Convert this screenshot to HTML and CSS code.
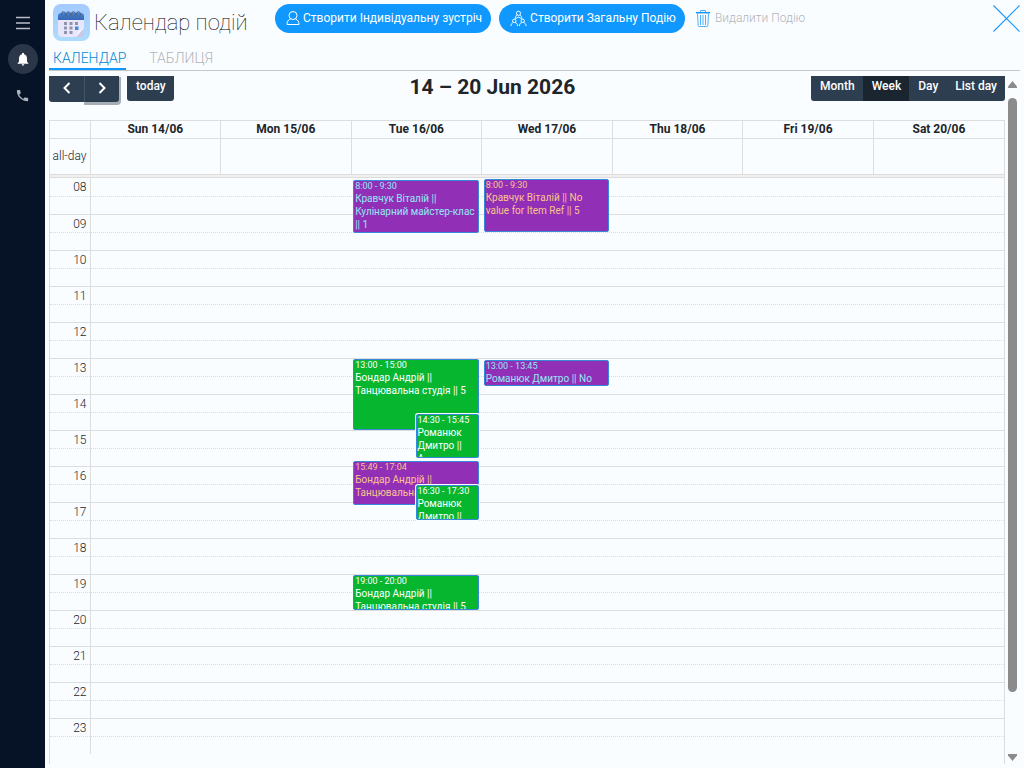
FILE: index.html
```html
<!DOCTYPE html>
<html lang="uk">
<head>
<meta charset="utf-8">
<title>Календар подій</title>
<link rel="stylesheet" href="styles.css">
</head>
<body>
<div class="app">
  <nav class="rail" aria-label="Навігація">
    <button class="rail-btn" aria-label="Меню"><svg width="14" height="14" viewBox="0 0 14 14" stroke="#b9bfc8" stroke-width="1.4"><path d="M0 1.5h14M0 7h14M0 12.5h14"/></svg></button>
    <button class="rail-btn rail-btn-active" aria-label="Сповіщення"><svg width="16" height="16" viewBox="0 0 24 24" fill="#fff"><path d="M12 22c1.1 0 2-.9 2-2h-4c0 1.1.9 2 2 2zm6-6v-5c0-3.1-1.6-5.6-4.5-6.300V4a1.500 1.500 0 0 0-3 0v.7C7.600 5.400 6 7.900 6 11v5l-2 2v1h16v-1z"/></svg></button>
    <button class="rail-btn" aria-label="Дзвінки"><svg width="15" height="15" viewBox="0 0 24 24" fill="#aeb4be"><path d="M6.600 10.800c1.400 2.800 3.800 5.100 6.600 6.600l2.200-2.200c.3-.3.700-.4 1-.2 1.100.4 2.300.6 3.600.6.6 0 1 .4 1 1V20c0 .6-.4 1-1 1C10.600 21 3 13.400 3 4c0-.6.5-1 1-1h3.500c.6 0 1 .4 1 1 0 1.300.2 2.500.6 3.600.1.300 0 .7-.2 1z"/></svg></button>
  </nav>

  <main class="main">
    <header class="head">
      <div class="brand">
        <svg class="logo" width="37" height="37" viewBox="0 0 37 37">
          <defs>
            <linearGradient id="bg" x1="0" y1="0" x2="0" y2="1"><stop offset="0" stop-color="#a3caff"/><stop offset="1" stop-color="#aedcfd"/></linearGradient>
            <linearGradient id="top" x1="0" y1="0" x2="0" y2="1"><stop offset="0" stop-color="#3e86dd"/><stop offset="1" stop-color="#3667b5"/></linearGradient>
          </defs>
          <rect width="37" height="37" rx="8" fill="url(#bg)"/>
          <path d="M8 9h20q3 0 3 3v13l-7 8H9q-4 0-4-4V12q0-3 3-3z" fill="#e7e6fa"/>
          <path d="M31 24v6q0 3-3 3h-5z" fill="#c9c8e6"/>
          <path d="M31 24l-8 9q1-7 8-9z" fill="#f5f3ff"/>
          <path d="M8 9h20q3 0 3 3v4H5v-4q0-3 3-3z" fill="url(#top)"/>
          <g fill="none" stroke="#506a98" stroke-width="1.300"><path d="M10.500 13c-3-1-2-6 .5-5s1.500 4 .5 4.500M15.500 13c-3-1-2-6 .5-5s1.500 4 .5 4.500M20.500 13c-3-1-2-6 .5-5s1.500 4 .5 4.500M25.500 13c-3-1-2-6 .5-5s1.500 4 .5 4.500"/></g>
          <g fill="#9294ae"><path d="M11 18h3v3h-3zM16.500 18h3v3h-3zM22 18h3v3h-3zM11 22.500h3v3h-3zM16.500 22.500h3v3h-3zM11 27h3v3h-3zM16.500 27h3v3h-3z"/><path fill="#4589d4" d="M22 22.500h3.500V26H22z"/></g>
        </svg>
        <h1 class="title">Календар подій</h1>
      </div>
      <div class="actions">
        <button class="pill"><svg width="14" height="16" viewBox="0 0 14 16" fill="none" stroke="#fff"><circle cx="7" cy="5.500" r="4"/><path d="M4.500 9C2 10 1 11.500 1 14.500h12C13 11.500 12 10 9.500 9"/></svg>Створити Індивідуальну зустріч</button>
        <button class="pill"><svg width="17" height="17" viewBox="0 0 18 17" fill="none" stroke="#fff"><circle cx="9" cy="3" r="2.200"/><path d="M7.500 5C6 5.500 5.700 7 5.500 9M10.500 5c1.500.5 1.800 2 2 4M6 8.500l3-1.500 3 1.500"/><circle cx="4.500" cy="11" r="1.800"/><circle cx="13.500" cy="11" r="1.800"/><path d="M1 16.500c0-2.200 1-3.200 2.500-3.700M8 16.500c0-2.200-1-3.200-2.500-3.700M10 16.500c0-2.200 1-3.200 2.500-3.700M17 16.500c0-2.200-1-3.200-2.500-3.700"/></svg>Створити Загальну Подію</button>
        <button class="ghost" disabled><svg width="14" height="18" viewBox="0 0 14 18" fill="none" stroke="#4eb0fa"><path stroke="#1697ff" stroke-width="1.500" d="M0 3.700h14"/><path d="M4.500 3V1.500h5V3M1.500 4.500l.7 12q0 1 1 1h7.600q1 0 1-1l.7-12M4.500 6v10M7 6v10M9.500 6v10"/></svg>Видалити Подію</button>
      </div>
      <button class="close" aria-label="Закрити"><svg width="27" height="27" viewBox="0 0 27 27" stroke="#1697ff" stroke-width="1.100"><path d="M.5.5l26 26M26.500.5l-26 26"/></svg></button>
    </header>

    <nav class="tabs">
      <a class="tab tab-active" href="#calendar">КАЛЕНДАР</a>
      <a class="tab" href="#table">ТАБЛИЦЯ</a>
    </nav>

    <div class="scroller">
      <section class="calendar" id="calendar">
        <div class="toolbar">
          <div class="tools">
            <div class="group">
              <button class="tool tool-arrow" aria-label="prev"><svg width="8" height="12" viewBox="0 0 8 12" fill="none" stroke="#fff" stroke-width="2"><path d="M6.500 1L1.500 6l5 5"/></svg></button>
              <button class="tool tool-arrow tool-focus" aria-label="next"><svg width="8" height="12" viewBox="0 0 8 12" fill="none" stroke="#fff" stroke-width="2"><path d="M1.500 1l5 5-5 5"/></svg></button>
            </div>
            <button class="tool">today</button>
          </div>
          <h2 class="range">14 – 20 Jun 2026</h2>
          <div class="group">
            <button class="tool">Month</button>
            <button class="tool tool-on">Week</button>
            <button class="tool">Day</button>
            <button class="tool">List day</button>
          </div>
        </div>

        <div class="board">
          <table class="days">
            <thead><tr><th class="axis"></th><th>Sun 14/06</th><th>Mon 15/06</th><th>Tue 16/06</th><th>Wed 17/06</th><th>Thu 18/06</th><th>Fri 19/06</th><th>Sat 20/06</th></tr></thead>
            <tbody><tr><td class="axis">all-day</td><td></td><td></td><td></td><td></td><td></td><td></td><td></td></tr></tbody>
          </table>
          <div class="divider"></div>
          <div class="timegrid">
            <table class="slots">
              <tbody>
                <tr><td class="axis">08</td><td></td></tr><tr class="half"><td class="axis"></td><td></td></tr>
                <tr><td class="axis">09</td><td></td></tr><tr class="half"><td class="axis"></td><td></td></tr>
                <tr><td class="axis">10</td><td></td></tr><tr class="half"><td class="axis"></td><td></td></tr>
                <tr><td class="axis">11</td><td></td></tr><tr class="half"><td class="axis"></td><td></td></tr>
                <tr><td class="axis">12</td><td></td></tr><tr class="half"><td class="axis"></td><td></td></tr>
                <tr><td class="axis">13</td><td></td></tr><tr class="half"><td class="axis"></td><td></td></tr>
                <tr><td class="axis">14</td><td></td></tr><tr class="half"><td class="axis"></td><td></td></tr>
                <tr><td class="axis">15</td><td></td></tr><tr class="half"><td class="axis"></td><td></td></tr>
                <tr><td class="axis">16</td><td></td></tr><tr class="half"><td class="axis"></td><td></td></tr>
                <tr><td class="axis">17</td><td></td></tr><tr class="half"><td class="axis"></td><td></td></tr>
                <tr><td class="axis">18</td><td></td></tr><tr class="half"><td class="axis"></td><td></td></tr>
                <tr><td class="axis">19</td><td></td></tr><tr class="half"><td class="axis"></td><td></td></tr>
                <tr><td class="axis">20</td><td></td></tr><tr class="half"><td class="axis"></td><td></td></tr>
                <tr><td class="axis">21</td><td></td></tr><tr class="half"><td class="axis"></td><td></td></tr>
                <tr><td class="axis">22</td><td></td></tr><tr class="half"><td class="axis"></td><td></td></tr>
                <tr><td class="axis">23</td><td></td></tr><tr class="half"><td class="axis"></td><td></td></tr>
              </tbody>
            </table>
            <div class="lanes">
              <div class="lane"></div>
              <div class="lane"></div>
              <div class="lane">
                <a class="event purple cyan" href="#e1" style="top:2px;height:53px"><span class="time">8:00 - 9:30</span><span class="name">Кравчук Віталій || Кулінарний майстер-клас || 1</span></a>
                <a class="event green" href="#e2" style="top:181px;height:71px"><span class="time">13:00 - 15:00</span><span class="name">Бондар Андрій || Танцювальна студія || 5</span></a>
                <a class="event green inset" href="#e3" style="top:236px;height:44px"><span class="time">14:30 - 15:45</span><span class="name">Романюк Дмитро ||<br>А</span></a>
                <a class="event purple peach" href="#e4" style="top:283px;height:44px"><span class="time">15:49 - 17:04</span><span class="name">Бондар Андрій || Танцювальна</span></a>
                <a class="event green inset" href="#e5" style="top:307px;height:35px"><span class="time">16:30 - 17:30</span><span class="name">Романюк Дмитро ||</span></a>
                <a class="event green" href="#e6" style="top:397px;height:35px"><span class="time">19:00 - 20:00</span><span class="name">Бондар Андрій || Танцювальна студія || 5</span></a>
              </div>
              <div class="lane">
                <a class="event purple peach" href="#e7" style="top:1px;height:53px"><span class="time">8:00 - 9:30</span><span class="name">Кравчук Віталій || No value for Item Ref || 5</span></a>
                <a class="event purple cyan" href="#e8" style="top:182px;height:26px"><span class="time">13:00 - 13:45</span><span class="name">Романюк Дмитро || No</span></a>
              </div>
              <div class="lane"></div>
              <div class="lane"></div>
              <div class="lane"></div>
            </div>
          </div>
        </div>
      </section>
      <div class="scrollbar" aria-hidden="true">
        <svg width="9" height="7" viewBox="0 0 9 7" fill="#8b8b8b"><path d="M4.500 0L9 5.500V7H0V5.500z"/></svg>
        <div class="track"><div class="thumb"></div></div>
        <svg width="9" height="7" viewBox="0 0 9 7" fill="#8b8b8b"><path d="M4.500 7L9 1.500V0H0v1.500z"/></svg>
      </div>
    </div>
  </main>
</div>
</body>
</html>
```
FILE: styles.css
```css
* { box-sizing: border-box; }

body {
  margin: 0;
  background: #fafdff;
  color: #212529;
  font-family: Roboto, "Liberation Sans", sans-serif;
  font-size: 12px;
}

button { font: inherit; border: 0; background: none; padding: 0; }
a { text-decoration: none; }
svg { display: block; flex: none; }

.app { display: flex; min-height: 100vh; }

.rail {
  width: 45px;
  flex: none;
  background: #061327;
  padding-top: 8px;
  display: flex;
  flex-direction: column;
  align-items: center;
  gap: 6px;
}
.rail-btn {
  width: 30px;
  height: 30px;
  border-radius: 50%;
  display: flex;
  align-items: center;
  justify-content: center;
}
.rail-btn-active { background: #2b3648; }

.main {
  flex: 1;
  min-width: 0;
  padding: 4px;
  display: flex;
  flex-direction: column;
}

.head { display: flex; align-items: flex-start; padding-left: 4px; }
.brand { display: flex; align-items: center; gap: 4px; width: 222px; }
.title { margin: 0; font-size: 22px; line-height: 36px; font-weight: 100; color: #000; white-space: nowrap; }
.actions { display: flex; gap: 8px; flex: 1; }
.pill, .ghost {
  height: 29px;
  display: flex;
  align-items: center;
  gap: 3px;
  padding-bottom: 1px;
  font-size: 12px;
  font-weight: 300;
  white-space: nowrap;
}
.pill { background: #1098ff; color: #fff; border-radius: 15px; padding: 0 9px 1px 11px; font-weight: 400; }
.ghost { color: #b4b4b8; padding-left: 3px; gap: 5px; }
.close { margin-top: 1px; }

.tabs {
  display: flex;
  gap: 19px;
  border-bottom: 1px solid #c5c7ca;
  padding-top: 7px;
}
.tab {
  height: 22px;
  padding-left: 4px;
  font-size: 14px;
  line-height: 20px;
  font-weight: 300;
  color: #b4b4b8;
}
.tab-active { color: #0288d1; border-bottom: 2px solid #1098ff; }

.scroller { flex: 1; display: flex; gap: 3px; padding-top: 5px; }
.calendar { flex: 1; min-width: 0; display: flex; flex-direction: column; }

.toolbar { display: flex; justify-content: space-between; align-items: flex-start; height: 44px; }
.tools, .group { display: flex; align-items: flex-start; }
.tools { gap: 8px; }
.tool {
  height: 25px;
  padding: 0 8px 5px 9px;
  background: #2c3e50;
  color: #fff;
  font-size: 12px;
  font-weight: 500;
  border-radius: 0 0 3px 3px;
}
.group .tool:not(:last-child) { border-bottom-right-radius: 0; }
.group .tool:not(:first-child) { border-bottom-left-radius: 0; }
.tool-arrow { height: 26px; padding: 0 13px 3px 14px; }
.tool-focus { box-shadow: 1px 2px 0 1px #a5aeb7; border-left: 1px solid #44566a; padding-left: 13px; }
.tool-on { background: #1a252f; }
.range { margin: 0; font-size: 21px; line-height: 22px; font-weight: 700; }

.board { flex: 1; border: 1px solid #ddd; border-bottom: 0; }
table { width: 100%; border-collapse: collapse; table-layout: fixed; }
th, td { padding: 0; }
.axis { width: 40px; text-align: right; padding-right: 3px; font-weight: 300; }
.days th { height: 17px; border-bottom: 1px solid #ddd; font-weight: 700; line-height: 15px; }
.days td { height: 36px; }
.days th + th, .days td + td { border-left: 1px solid #ddd; }
.divider { height: 4px; background: #efefef; border: solid #ddd; border-width: 1px 0; }

.timegrid { position: relative; }
.slots td { height: 18px; padding-top: 1px; border-top: 1px solid #ddd; line-height: 16px; }
.slots td + td { border-left: 1px solid #ddd; }
.slots .half td { border-top-style: dotted; }
.slots tr:first-child td { border-top: 0; }
.lanes {
  position: absolute;
  inset: 0 0 0 40px;
  display: grid;
  grid-template-columns: repeat(7, 1fr);
}
.lane { position: relative; }
.event {
  position: absolute;
  left: 2px;
  right: 3px;
  border: 1px solid #3788d8;
  border-radius: 2px;
  padding: 0 1px;
  overflow: hidden;
  color: #fff;
  font-size: 10px;
  line-height: 13px;
}
.inset { left: 50%; padding: 0; box-shadow: 0 0 0 1px #fafdff; }
.time { display: block; font-size: 9px; line-height: 11px; }
.name { display: block; }
.green { background: #07b62f; }
.purple { background: #922fb7; }
.cyan { color: #8ee9f5; }
.peach { color: #fbc38c; }

.scrollbar { display: flex; flex-direction: column; align-items: flex-start; width: 12px; padding: 5px 0 3px; gap: 10px; }
.track { flex: 1; width: 9px; }
.thumb { height: 92%; border-radius: 5px; background: #8b8b8b; }
```
